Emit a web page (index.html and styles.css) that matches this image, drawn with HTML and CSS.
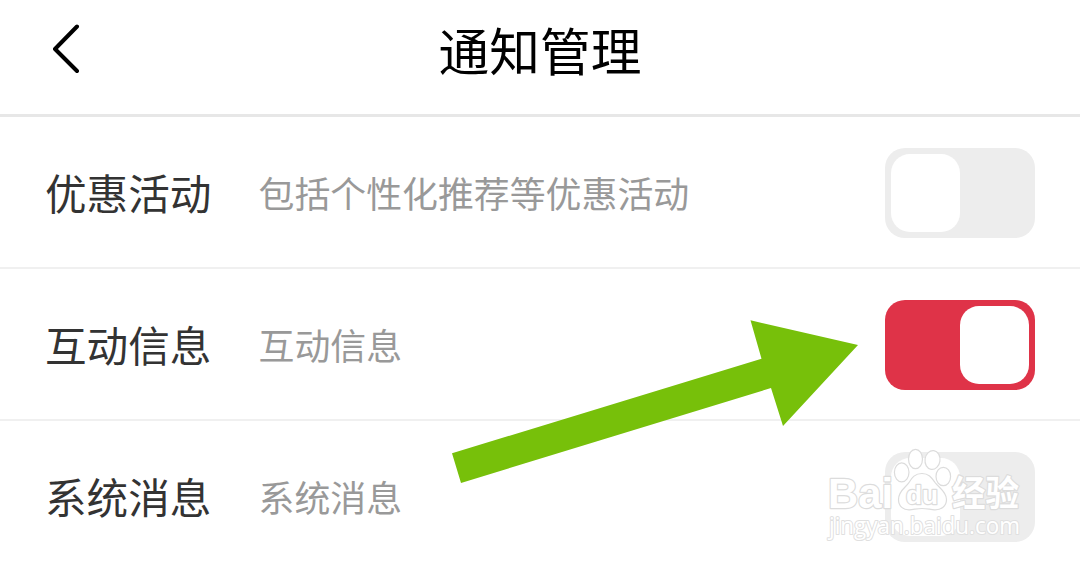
FILE: index.html
```html
<!DOCTYPE html>
<html lang="zh-CN">
<head>
<meta charset="utf-8">
<title>通知管理</title>
<link rel="stylesheet" href="styles.css">
</head>
<body>
<header class="topbar">
  <svg class="back" viewBox="0 0 30 50"><path d="M26 2.500 4 25 26 47"/></svg>
  <h1 class="title">通知管理</h1>
</header>
<main class="list">
  <section class="row"><span class="name">优惠活动</span><span class="desc">包括个性化推荐等优惠活动</span><span class="switch"><span class="knob"></span></span></section>
  <section class="row"><span class="name">互动信息</span><span class="desc">互动信息</span><span class="switch on"><span class="knob"></span></span></section>
  <section class="row"><span class="name">系统消息</span><span class="desc">系统消息</span><span class="switch"><span class="knob"></span></span></section>
</main>
<svg class="arrow" viewBox="0 0 1080 564"><path d="M452 453.3 761.5 358.7 750.5 320.3 858 345 783 426 771 388 461 483Z"/></svg>
<svg class="watermark" viewBox="820 440 220 110">
  <g class="mark">
    <ellipse cx="901.7" cy="472.3" rx="7.300" ry="9.500"/><ellipse cx="915.5" cy="459" rx="7" ry="9.700"/><ellipse cx="932.5" cy="460" rx="7.500" ry="9.500" transform="rotate(8 932.5 460)"/><ellipse cx="943.3" cy="476.5" rx="7.300" ry="9.200"/>
    <path d="M922 473.500c-7 0-10 4-13 9-3 5-10.500 8-10.500 17 0 7 5 10.500 11 10.300 4-.2 8-1.300 12.500-1.300s8.500 1.100 12.500 1.300c6 .2 12-3 12-10.300 0-8-8-12-11.500-17-3.500-5-6-9-13-9Z"/>
    <text class="brand" x="828" y="507.500" textLength="65" lengthAdjust="spacingAndGlyphs">Bai</text>
    <text class="brand cn" x="952" y="505.500" textLength="67" lengthAdjust="spacingAndGlyphs">经验</text>
    <text class="site" x="829" y="534" textLength="191" lengthAdjust="spacingAndGlyphs">jingyan.baidu.com</text>
    <text class="du" x="906" y="503.500" textLength="32" lengthAdjust="spacingAndGlyphs">du</text>
  </g>
</svg>
</body>
</html>
```
FILE: styles.css
```css
*{box-sizing:border-box}
body{margin:0;width:1080px;height:564px;overflow:hidden;position:relative;background:#fff;font-family:"Noto Sans CJK SC",sans-serif}
.topbar{height:117px;border-bottom:3px solid #e7e7e7;display:grid;grid-template-columns:130px 1fr 130px;padding-bottom:16px;align-items:center}
.back{width:30px;height:50px;margin-left:51px;fill:none;stroke:#000;stroke-width:4;stroke-linecap:round;stroke-linejoin:round}
.title{margin:0;text-align:center;font-size:50.7px;font-weight:400;line-height:72px;color:#000}
.row{height:152px;border-bottom:2px solid #f0f0f0;padding:0 45px;display:flex;align-items:center}
.name{width:213.500px;font-size:41.6px;line-height:60px;color:#333}
.desc{font-size:35.9px;color:#999;padding-bottom:1px}
.switch{margin-left:auto;margin-top:1px;width:150px;height:90px;border-radius:20px;background:#ededed;padding:6px;display:flex}
.knob{width:69px;height:78px;border-radius:19px;background:#fff}
.on{background:#df3348;justify-content:flex-end}
.arrow{position:absolute;left:0;top:0;width:1080px;height:564px;fill:#77c00a}
.watermark{position:absolute;left:820px;top:440px;width:220px;height:110px}
.mark{fill:#fff;stroke:#dcdcdc;stroke-width:1.2;stroke-linejoin:round}
.mark text{paint-order:stroke;stroke-width:2.4}
.brand{font:700 43px "Liberation Sans",sans-serif}
.cn{font:700 35px "Noto Sans CJK SC",sans-serif}
.mark .site{font:23px "Open Sans",sans-serif;stroke:#e0e0e0;stroke-width:2}
.du{font:700 26px "Liberation Sans",sans-serif}
```
